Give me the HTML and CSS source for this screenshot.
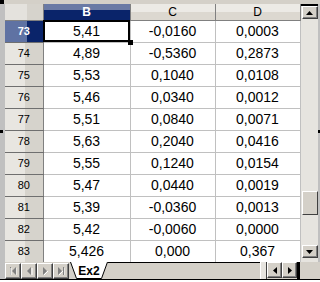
FILE: index.html
```html
<!DOCTYPE html>
<html lang="en">
<head>
    <meta charset="UTF-8">
    <title>Ex2</title>
    <link rel="stylesheet" href="styles.css">
</head>
<body>
    <div class="app">
        <div class="top-strip"><span class="corner-dot"></span></div>
        <div class="main">
            <div class="left-strip"><span class="mark"></span></div>
            <table class="grid">
                <colgroup>
                    <col class="c-rh"><col class="c-b"><col class="c-c"><col class="c-d">
                </colgroup>
                <thead>
                    <tr>
                        <th class="corner"></th>
                        <th class="col-head active">B</th>
                        <th class="col-head">C</th>
                        <th class="col-head">D</th>
                    </tr>
                </thead>
                <tbody>
                    <tr><th class="row-head active">73</th><td class="selected">5,41<span class="handle"></span></td><td>-0,0160</td><td>0,0003</td></tr>
                    <tr><th class="row-head">74</th><td>4,89</td><td>-0,5360</td><td>0,2873</td></tr>
                    <tr><th class="row-head">75</th><td>5,53</td><td>0,1040</td><td>0,0108</td></tr>
                    <tr><th class="row-head">76</th><td>5,46</td><td>0,0340</td><td>0,0012</td></tr>
                    <tr><th class="row-head">77</th><td>5,51</td><td>0,0840</td><td>0,0071</td></tr>
                    <tr><th class="row-head">78</th><td>5,63</td><td>0,2040</td><td>0,0416</td></tr>
                    <tr><th class="row-head">79</th><td>5,55</td><td>0,1240</td><td>0,0154</td></tr>
                    <tr><th class="row-head">80</th><td>5,47</td><td>0,0440</td><td>0,0019</td></tr>
                    <tr><th class="row-head">81</th><td>5,39</td><td>-0,0360</td><td>0,0013</td></tr>
                    <tr><th class="row-head">82</th><td>5,42</td><td>-0,0060</td><td>0,0000</td></tr>
                    <tr><th class="row-head">83</th><td>5,426</td><td>0,000</td><td>0,367</td></tr>
                </tbody>
            </table>
            <div class="vscroll">
                <div class="vs-top"></div>
                <button class="sb-btn">
                    <svg width="7" height="4" viewBox="0 0 7 4"><path d="M3.5 0 L7 4 L0 4 Z" fill="#000"/></svg>
                </button>
                <div class="vs-track">
                    <div class="vs-thumb"></div>
                </div>
                <button class="sb-btn">
                    <svg width="7" height="4" viewBox="0 0 7 4"><path d="M0 0 L7 0 L3.5 4 Z" fill="#000"/></svg>
                </button>
                <div class="vs-bottom"></div>
            </div>
            <div class="right-strip"><span class="mark"></span></div>
        </div>
        <div class="tabbar">
            <div class="left-strip"></div>
            <div class="nav">
                <button class="nav-btn">
                    <svg width="8" height="8" viewBox="0 0 8 8"><path d="M1 0 H2 V8 H1 Z M7 0 V8 L3 4 Z" fill="#808080"/><path d="M2 1 V8 M8 1 V8" stroke="#fff" stroke-width="1"/></svg>
                </button>
                <button class="nav-btn">
                    <svg width="8" height="8" viewBox="0 0 8 8"><path d="M6 0 V8 L2 4 Z" fill="#808080"/><path d="M7 1 V8" stroke="#fff"/></svg>
                </button>
                <button class="nav-btn">
                    <svg width="8" height="8" viewBox="0 0 8 8"><path d="M2 0 V8 L6 4 Z" fill="#808080"/><path d="M3 8 L7 4" stroke="#fff"/></svg>
                </button>
                <button class="nav-btn">
                    <svg width="8" height="8" viewBox="0 0 8 8"><path d="M1 0 V8 L5 4 Z M6 0 H7 V8 H6 Z" fill="#808080"/><path d="M2 8 L6 4 M8 1 V8" stroke="#fff"/></svg>
                </button>
            </div>
            <div class="tab">
                <svg class="tab-shape" width="38" height="17" viewBox="0 0 38 17">
                    <path d="M0.5 0 L6.5 16.5 L31.5 16.5 L37.5 0" fill="#fff" stroke="#000"/>
                </svg>
                <span class="tab-label">Ex2</span>
            </div>
            <div class="tab-space"></div>
            <div class="splitter"></div>
            <button class="hs-btn">
                <svg width="4" height="7" viewBox="0 0 4 7"><path d="M4 0 V7 L0 3.5 Z" fill="#000"/></svg>
            </button>
            <button class="hs-btn">
                <svg width="4" height="7" viewBox="0 0 4 7"><path d="M0 0 V7 L4 3.5 Z" fill="#000"/></svg>
            </button>
            <div class="hs-end"></div>
            <div class="tab-corner"></div>
        </div>
        <div class="bottom-strip"></div>
    </div>
</body>
</html>
```

FILE: styles.css
```css
* { box-sizing: border-box; }
body {
    margin: 0;
    background: #fff;
    font-family: "Liberation Sans", Arial, sans-serif;
}
.app {
    width: 320px;
    height: 282px;
    display: flex;
    flex-direction: column;
    overflow: hidden;
    background: #d4d0c8;
}
.top-strip {
    height: 4px;
    background: #d4d0c8;
    display: flex;
}
.corner-dot {
    width: 4px;
    height: 4px;
    background: #000;
}
.main {
    display: flex;
    height: 258px;
}
.left-strip {
    width: 5px;
    flex: none;
    background: #c0c0c0;
    display: flex;
    flex-direction: column;
    justify-content: center;
}
.right-strip {
    width: 3px;
    flex: none;
    background: #c0c0c0;
    display: flex;
    flex-direction: column;
    justify-content: center;
    align-items: flex-end;
}
.mark {
    width: 3px;
    height: 3px;
    background: #000;
    margin-top: -4px;
}

/* grid */
.grid {
    width: 295px;
    border-collapse: collapse;
    table-layout: fixed;
    background: #fff;
}
.c-rh { width: 38px; }
.c-b { width: 87px; }
.c-c { width: 85px; }
.c-d { width: 85px; }
.grid thead th {
    height: 16px;
    padding: 0;
    font-size: 12px;
    font-weight: normal;
    color: #000;
    border-right: 1px solid #808080;
    border-bottom: 1px solid #808080;
    background: linear-gradient(#eceae5 0, #eceae5 8px, #dcd8d0 8px);
}
.grid thead th.corner {
    background: linear-gradient(90deg, #e4e2dd 0, #e4e2dd 22px, #d6d3cc 22px);
}
.grid thead th.active {
    background: linear-gradient(#6a7aa5 0, #6a7aa5 6px, #0a246a 6px);
    color: #fff;
    font-weight: bold;
}
.grid td {
    height: 22px;
    padding: 0;
    text-align: center;
    font-size: 14px;
    color: #000;
    border-right: 1px solid #c0c0c0;
    border-bottom: 1px solid #c0c0c0;
}
.row-head {
    padding: 0;
    font-size: 11px;
    font-weight: normal;
    color: #000;
    text-align: center;
    border-bottom: 1px solid #6f6f6f;
    border-right: 1px solid #808080;
    background: linear-gradient(90deg, #e8e6e1 0, #e8e6e1 20px, #d6d3cc 20px);
}
.row-head.active {
    background: linear-gradient(90deg, #5f72a3 0, #5f72a3 22px, #0a246a 22px);
    color: #fff;
    font-weight: bold;
}
td.selected {
    position: relative;
    outline: 2px solid #000;
    outline-offset: -2px;
}
.handle {
    position: absolute;
    right: -3px;
    bottom: -3px;
    width: 5px;
    height: 5px;
    background: #000;
}

/* vertical scrollbar */
.vscroll {
    width: 17px;
    flex: none;
    display: flex;
    flex-direction: column;
    background: #e6e4df;
}
.vs-top {
    height: 2px;
    background: #000;
}
.sb-btn, .hs-btn, .nav-btn {
    padding: 0;
    margin: 0;
    display: flex;
    align-items: center;
    justify-content: center;
    background: #d4d0c8;
    border: 1px solid;
    border-color: #fff #404040 #404040 #fff;
    box-shadow: inset -1px -1px #808080;
}
.sb-btn {
    width: 16px;
    height: 13px;
    margin-left: 1px;
}
.vs-track {
    flex: 1;
    display: flex;
    flex-direction: column;
    justify-content: flex-end;
    padding-bottom: 30px;
}
.vs-thumb {
    width: 16px;
    height: 24px;
    margin-left: 1px;
    background: #d4d0c8;
    border: 1px solid;
    border-color: #fff #404040 #404040 #fff;
}
.vs-bottom {
    height: 4px;
}

/* sheet tabs */
.tabbar {
    height: 17px;
    display: flex;
    background: #d4d0c8;
}
.nav {
    display: flex;
    width: 65px;
    flex: none;
}
.nav-btn {
    width: 16px;
    height: 16px;
    flex: none;
    margin-top: 1px;
}
.tab {
    position: relative;
    width: 38px;
    height: 17px;
    flex: none;
    display: flex;
    justify-content: center;
    align-items: center;
}
.tab-shape {
    position: absolute;
    left: 0;
    top: 0;
}
.tab-label {
    position: relative;
    font-size: 12px;
    font-weight: bold;
    color: #000;
}
.tab-space {
    flex: 1;
    border-top: 1px solid #000;
}
.splitter {
    width: 7px;
    flex: none;
    border-left: 1px solid #fff;
    border-right: 1px solid #404040;
    background: #e6e4df;
}
.hs-btn {
    width: 15px;
    height: 16px;
    flex: none;
}
.hs-end {
    width: 3px;
    flex: none;
    background: #000;
}
.tab-corner {
    width: 20px;
    flex: none;
    background: #d4d0c8;
}
.bottom-strip {
    height: 3px;
    background: #fff;
    border-top: 1px solid #000;
}
```
